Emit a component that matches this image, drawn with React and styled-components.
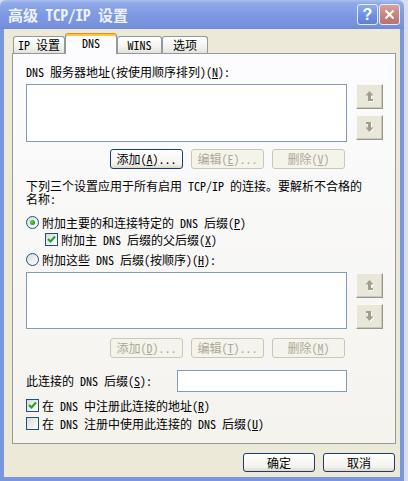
import React from 'react'
import styled, { createGlobalStyle } from 'styled-components'

const GlobalStyle = createGlobalStyle`
  html, body {
    margin: 0;
    padding: 0;
    background: #d9dee8;
  }
  body {
    font-family: "Noto Sans Mono CJK SC", "Noto Sans CJK SC", "Liberation Mono", monospace;
    font-size: 12px;
    color: #000;
  }
`

const Window = styled.div`
  width: 404px;
  height: 481px;
  display: flex;
  flex-direction: column;
`

const TitleBar = styled.div`
  height: 29px;
  display: flex;
  align-items: center;
  padding: 0 4px 0 8px;
  box-sizing: border-box;
  border-radius: 6px 6px 0 0;
  background: linear-gradient(#aac0f0 0%, #8fa9e8 12%, #7f9be2 45%, #7893de 85%, #6f8ad6 100%);
`

const Title = styled.div`
  flex: 1;
  color: #eef2fc;
  font-weight: bold;
  font-size: 15px;
  line-height: 16px;
  white-space: nowrap;
`

const CaptionButton = styled.div`
  width: 21px;
  height: 21px;
  margin-left: 1px;
  box-sizing: border-box;
  border: 1px solid #e6ecfa;
  border-radius: 3px;
  display: flex;
  align-items: center;
  justify-content: center;
  color: #fff;
  font-family: "Liberation Sans", sans-serif;
  font-weight: bold;
  font-size: 16px;
  background: ${p => p.$close
    ? 'linear-gradient(#d9a29b, #c4807a 60%, #b9726d)'
    : 'linear-gradient(#8eaaf0, #6c8fe0 60%, #5f82d8)'};
`

const Frame = styled.div`
  flex: 1;
  display: flex;
  flex-direction: column;
  background: #ece9d8;
  border: 4px solid #7a96df;
  border-top: none;
  padding: 4px 4px 5px 8px;
`

const TabRow = styled.div`
  display: flex;
  align-items: flex-end;
  height: 20px;
  padding-left: 1px;
`

const Tab = styled.div`
  position: relative;
  z-index: ${p => (p.$active ? 2 : 1)};
  width: ${p => p.$w}px;
  height: ${p => (p.$active ? 21 : 17)}px;
  margin-bottom: ${p => (p.$active ? -1 : 0)}px;
  box-sizing: border-box;
  border: 1px solid #919b9c;
  border-bottom: none;
  border-radius: 3px 3px 0 0;
  display: flex;
  align-items: center;
  justify-content: center;
  line-height: 14px;
  background: ${p => (p.$active ? '#fcfcfe' : 'linear-gradient(#ffffff, #f3f3ef 60%, #e3e2da)')};
  ${p => p.$active && `
    border-top-color: #e68b2c;
    box-shadow: inset 0 2px 0 #ffc83c;
    padding-bottom: 2px;
  `}
`

const Panel = styled.div`
  height: 391px;
  box-sizing: border-box;
  border: 1px solid #919b9c;
  background: linear-gradient(#fcfcfe, #f4f3ee);
  padding: 0 12px 0 13px;
  display: flex;
  flex-direction: column;
`

const Label = styled.div`
  height: 14px;
  line-height: 14px;
  margin-top: ${p => p.$mt || 0}px;
  white-space: nowrap;
`

const Para = styled.div`
  line-height: 13px;
  margin-top: ${p => p.$mt || 0}px;
`

const ListRow = styled.div`
  display: flex;
  margin-top: ${p => p.$mt || 0}px;
`

const ListBox = styled.div`
  width: 321px;
  height: ${p => p.$h}px;
  box-sizing: border-box;
  border: 1px solid #7f9db9;
  background: #fff;
`

const ArrowCol = styled.div`
  display: flex;
  flex-direction: column;
  gap: 6px;
  margin-left: 9px;
  padding-top: ${p => p.$pt || 0}px;
`

const ArrowButton = styled.div`
  width: 27px;
  height: 25px;
  box-sizing: border-box;
  background: #e9e7da;
  border: 1px solid;
  border-color: #faf9f4 #98968a #98968a #faf9f4;
  box-shadow: inset -1px -1px 0 #cbc9bc;
  display: flex;
  align-items: center;
  justify-content: center;
`

const ButtonRow = styled.div`
  width: 319px;
  display: flex;
  justify-content: flex-end;
  gap: 8px;
  margin-top: ${p => p.$mt || 0}px;
`

const Button = styled.div`
  width: ${p => p.$w || 73}px;
  height: ${p => p.$h || 20}px;
  box-sizing: border-box;
  border: 1px solid ${p => (p.$disabled ? '#c9c7ba' : '#1d3b6e')};
  border-radius: 3px;
  display: flex;
  align-items: center;
  justify-content: center;
  line-height: 14px;
  white-space: nowrap;
  color: ${p => (p.$disabled ? '#aca899' : '#000')};
  background: ${p => (p.$disabled ? '#f5f4ea' : 'linear-gradient(#ffffff, #f4f3ee 75%, #dcd8cc)')};
`

const OptionRow = styled.div`
  display: flex;
  align-items: center;
  height: 16px;
  margin-top: ${p => p.$mt || 0}px;
  margin-left: ${p => p.$indent || 0}px;
  white-space: nowrap;
`

const RadioCircle = styled.div`
  width: 13px;
  height: 13px;
  box-sizing: border-box;
  border-radius: 50%;
  border: 1px solid #1c5180;
  background: linear-gradient(135deg, #dcdad5, #ffffff);
  display: flex;
  align-items: center;
  justify-content: center;
  margin-right: 3px;
  &::after {
    content: '';
    display: ${p => (p.$checked ? 'block' : 'none')};
    width: 5px;
    height: 5px;
    border-radius: 50%;
    background: radial-gradient(circle at 35% 35%, #5fcf5f, #21a121 70%);
  }
`

const CheckBox = styled.div`
  width: 13px;
  height: 13px;
  box-sizing: border-box;
  border: 1px solid #1c5180;
  background: linear-gradient(135deg, #dcdad5, #ffffff);
  display: flex;
  align-items: center;
  justify-content: center;
  margin-right: 3px;
`

const SuffixRow = styled.div`
  display: flex;
  align-items: center;
  margin-top: 12px;
`

const SuffixLabel = styled.div`
  width: 151px;
  white-space: nowrap;
  line-height: 14px;
`

const TextInput = styled.div`
  width: 170px;
  height: 22px;
  box-sizing: border-box;
  border: 1px solid #7f9db9;
  background: #fff;
`

const Footer = styled.div`
  display: flex;
  justify-content: flex-end;
  gap: 8px;
  margin-top: 9px;
  padding-right: 1px;
`

const UpIcon = () => (
  <svg width="10" height="11" viewBox="0 0 10 11">
    <path d="M5.5 1 L1.5 5.5 H4 V11 H9 V9 H7 V5.5 H9.5 Z" fill="#fff" />
    <path d="M4.5 0 L0.5 4.5 H3 V10 H8 V8 H6 V4.5 H8.5 Z" fill="#a19d8a" />
  </svg>
)

const DownIcon = () => (
  <svg width="10" height="11" viewBox="0 0 10 11">
    <path d="M5.5 11 L1.5 6.5 H4 V3 H2 V1 H7 V6.5 H9.5 Z" fill="#fff" />
    <path d="M4.5 10 L0.5 5.5 H3 V2 H1 V0 H6 V5.5 H8.5 Z" fill="#a19d8a" />
  </svg>
)

const Tick = () => (
  <svg width="9" height="9" viewBox="0 0 9 9">
    <path d="M1 4 L3.5 6.5 L8 1.5" stroke="#21a121" strokeWidth="2" fill="none" />
  </svg>
)

const CloseGlyph = () => (
  <svg width="11" height="11" viewBox="0 0 11 11">
    <path d="M1.5 1.5 L9.5 9.5 M9.5 1.5 L1.5 9.5" stroke="#fff" strokeWidth="2" />
  </svg>
)

const Key = ({ k }) => <>(<u>{k}</u>)</>

const Arrows = ({ pt }) => (
  <ArrowCol $pt={pt}>
    <ArrowButton><UpIcon /></ArrowButton>
    <ArrowButton><DownIcon /></ArrowButton>
  </ArrowCol>
)

const tabs = [
  { label: 'IP 设置', w: 52 },
  { label: 'DNS', w: 52, active: true },
  { label: 'WINS', w: 45 },
  { label: '选项', w: 46 },
]

export default function App() {
  return (
    <>
      <GlobalStyle />
      <Window>
        <TitleBar>
          <Title>高级 TCP/IP 设置</Title>
          <CaptionButton>?</CaptionButton>
          <CaptionButton $close><CloseGlyph /></CaptionButton>
        </TitleBar>
        <Frame>
          <TabRow>
            {tabs.map(t => (
              <Tab key={t.label} $w={t.w} $active={t.active}>{t.label}</Tab>
            ))}
          </TabRow>
          <Panel>
            <Label $mt={11}>DNS 服务器地址(按使用顺序排列)<Key k="N" />:</Label>
            <ListRow $mt={5}>
              <ListBox $h={58} />
              <Arrows />
            </ListRow>
            <ButtonRow $mt={7}>
              <Button>添加<Key k="A" />...</Button>
              <Button $disabled>编辑<Key k="E" />...</Button>
              <Button $disabled>删除<Key k="V" /></Button>
            </ButtonRow>
            <Para $mt={10}>
              下列三个设置应用于所有启用 TCP/IP 的连接。要解析不合格的<br />名称:
            </Para>
            <OptionRow $mt={9}>
              <RadioCircle $checked />附加主要的和连接特定的 DNS 后缀<Key k="P" />
            </OptionRow>
            <OptionRow $mt={1} $indent={19}>
              <CheckBox><Tick /></CheckBox>附加主 DNS 后缀的父后缀<Key k="X" />
            </OptionRow>
            <OptionRow $mt={4}>
              <RadioCircle />附加这些 DNS 后缀(按顺序)<Key k="H" />:
            </OptionRow>
            <ListRow $mt={5}>
              <ListBox $h={57} />
              <Arrows pt={1} />
            </ListRow>
            <ButtonRow $mt={9}>
              <Button $disabled>添加<Key k="D" />...</Button>
              <Button $disabled>编辑<Key k="T" />...</Button>
              <Button $disabled>删除<Key k="M" /></Button>
            </ButtonRow>
            <SuffixRow>
              <SuffixLabel>此连接的 DNS 后缀<Key k="S" />:</SuffixLabel>
              <TextInput />
            </SuffixRow>
            <OptionRow $mt={5}>
              <CheckBox><Tick /></CheckBox>在 DNS 中注册此连接的地址<Key k="R" />
            </OptionRow>
            <OptionRow $mt={2}>
              <CheckBox />在 DNS 注册中使用此连接的 DNS 后缀<Key k="U" />
            </OptionRow>
          </Panel>
          <Footer>
            <Button $w={72} $h={19}>确定</Button>
            <Button $w={72} $h={19}>取消</Button>
          </Footer>
        </Frame>
      </Window>
    </>
  )
}
